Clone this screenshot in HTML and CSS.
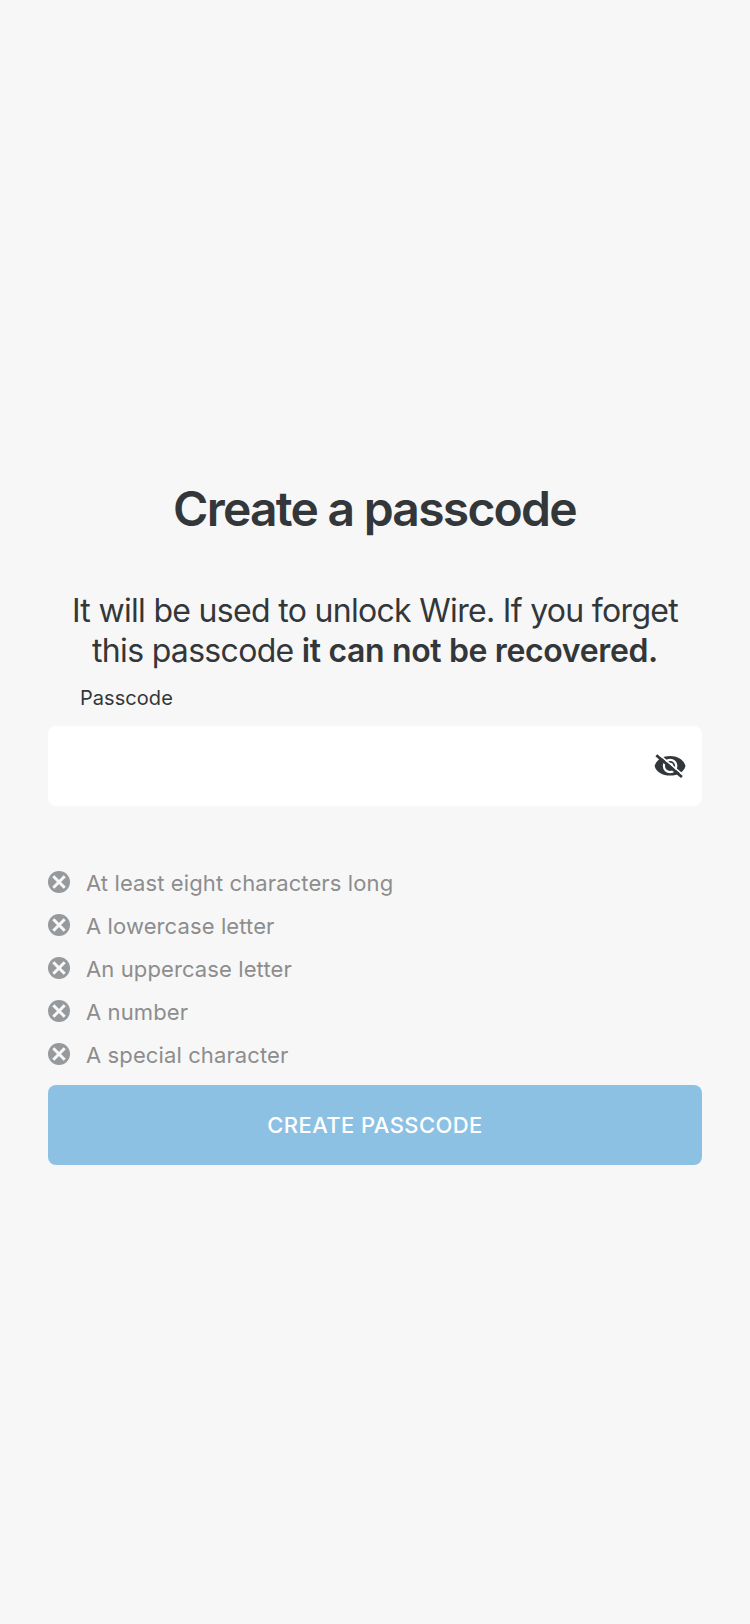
FILE: index.html
```html
<!DOCTYPE html>
<html lang="en">
<head>
<meta charset="utf-8">
<title>Create a passcode</title>
<link rel="stylesheet" href="styles.css">
</head>
<body>
<svg class="defs" width="0" height="0">
  <symbol id="cross" viewBox="0 0 22 22">
    <circle cx="11" cy="11" r="11" fill="#969a9d"/>
    <path d="M5.300 5.300 16.700 16.700M16.700 5.300 5.300 16.700" stroke="#f8f8f8" stroke-width="3"/>
  </symbol>
</svg>
<main class="screen">
  <h1 class="title"><span>Create a passcode</span></h1>
  <p class="message"><span class="line">It will be used to unlock Wire. If you forget</span> <span class="line">this passcode <b>it can not be recovered.</b></span></p>
  <div class="label">Passcode</div>
  <div class="field">
    <svg class="eye" width="32" height="24" viewBox="0 0 32 24">
      <path d="M.6 12C2.100 6 8.500 2 16.100 2S30 6 31.500 12C30 18 23.700 21.600 16.100 21.600S2.100 18 .6 12Z" fill="#33373a"/>
      <circle cx="16.100" cy="12" r="6.200" fill="none" stroke="#fff" stroke-width="2.200"/>
      <path d="M16.100 9.500A2.500 2.500 0 0 1 18.600 12" fill="none" stroke="#fff" stroke-width="1.400"/>
      <path d="M4.500 0 30 21.700" stroke="#fff" stroke-width="1.700"/>
      <path d="M2.300 1.200 27.900 23" stroke="#33373a" stroke-width="2.800"/>
    </svg>
  </div>
  <ul class="rules">
    <li><svg class="cross"><use href="#cross"/></svg><span>At least eight characters long</span></li>
    <li><svg class="cross"><use href="#cross"/></svg><span>A lowercase letter</span></li>
    <li><svg class="cross"><use href="#cross"/></svg><span>An uppercase letter</span></li>
    <li><svg class="cross"><use href="#cross"/></svg><span>A number</span></li>
    <li><svg class="cross"><use href="#cross"/></svg><span>A special character</span></li>
  </ul>
  <button class="submit">CREATE PASSCODE</button>
</main>
</body>
</html>
```
FILE: styles.css
```css
* { box-sizing: border-box; margin: 0; padding: 0; }
body { background: #f7f7f7; color: #33373a; font-family: Inter, "Liberation Sans", sans-serif; }
.defs { display: block; }
.screen { min-height: 1624px; padding: 480px 48px 0; }
.title { font-size: 48px; line-height: 58px; font-weight: 600; letter-spacing: -1.75px; text-align: center; }
.title span { margin-right: 1px; }
.message { margin-top: 53px; font-size: 32px; line-height: 40px; letter-spacing: -0.69px; text-align: center; }
.line { display: block; white-space: nowrap; }
.message b { font-weight: 600; letter-spacing: -0.36px; }
.label { margin: 15px 0 16px 32px; font-size: 20px; line-height: 24px; letter-spacing: 0.05px; }
.field { height: 80px; border-radius: 8px; background: #fff; display: flex; align-items: center; justify-content: flex-end; padding-right: 16px; }
.eye { display: block; }
.rules { margin-top: 64px; list-style: none; color: #8d8d8d; font-size: 22px; line-height: 26px; letter-spacing: 0.11px; }
.rules li { display: flex; align-items: flex-start; gap: 16px; height: 43px; }
.cross { width: 22px; height: 22px; margin-top: 1px; flex: none; }
.submit { display: block; width: 100%; height: 80px; border: 0; border-radius: 8px; background: #8dc1e4; color: #fff; font: 500 22px/80px Inter, "Liberation Sans", sans-serif; letter-spacing: 0.4px; }
```
